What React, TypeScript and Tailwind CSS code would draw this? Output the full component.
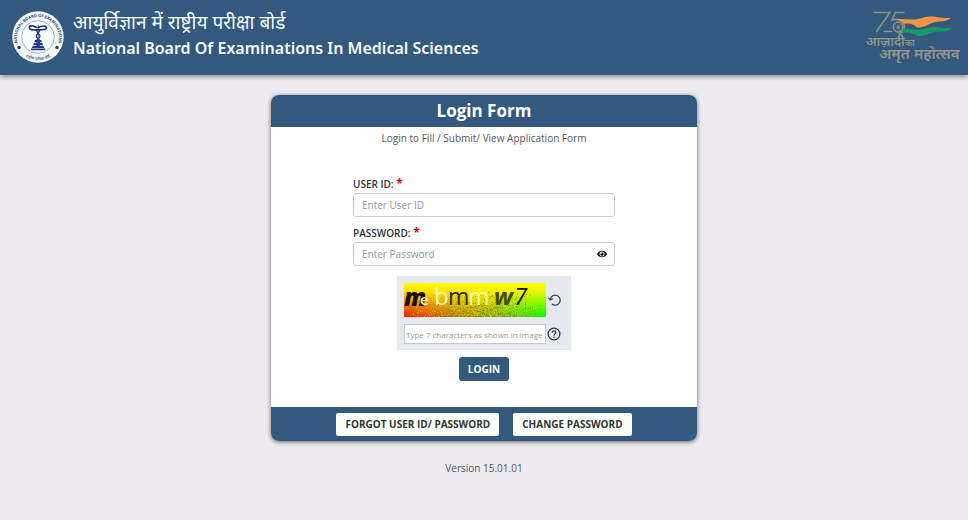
import React, { useState } from 'react';
import { FaEye } from 'react-icons/fa';

const HINDI = "'Noto Sans', 'Noto Sans Devanagari', 'Lohit Devanagari', sans-serif";

// Fixed-seed speckles so the captcha grain stays the same between renders
const speckles = (() => {
  const list: { x: number; y: number; c: string }[] = [];
  let seed = 7;
  const next = () => {
    seed = (seed * 16807) % 2147483647;
    return seed / 2147483647;
  };
  for (let i = 0; i < 900; i++) {
    const y = 33 - Math.floor(next() * next() * 26);
    const x = Math.floor(((next() + next()) / 2) * 142);
    const colors = ['#d8e000', '#7c7c10', '#c06a10', '#5fae10'];
    list.push({ x, y, c: colors[Math.floor(next() * 4)] });
  }
  return list;
})();

function BoardSeal() {
  return (
    <svg viewBox="0 0 52 52" className="h-[52px] w-[52px] shrink-0" role="img" aria-label="Board seal">
      <defs>
        <path id="sealTop" d="M6 33.500A21 21 0 1 1 46 33.500" />
        <path id="sealBottom" d="M10 43A23.500 23.500 0 0 0 42 43" />
      </defs>
      <circle cx="26" cy="26" r="25.700" fill="#f2f8fa" />
      <circle cx="26" cy="26" r="16.300" fill="#f6fbfb" stroke="#7e93a8" strokeWidth="0.700" />
      <text fontFamily="Open Sans, sans-serif" fontSize="4" fontWeight="700" fill="#2c4569">
        <textPath href="#sealTop" startOffset="50%" textAnchor="middle">NATIONAL BOARD OF EXAMINATIONS</textPath>
      </text>
      <text fontFamily={HINDI} fontSize="4" fontWeight="600" fill="#4c6480">
        <textPath href="#sealBottom" startOffset="50%" textAnchor="middle">राष्ट्रीय परीक्षा बोर्ड</textPath>
      </text>
      <circle cx="7" cy="36.500" r="1.700" fill="#33403f" />
      <circle cx="45" cy="36.500" r="1.700" fill="#33403f" />
      <g fill="none" stroke="#1c2a63" strokeLinecap="round">
        <path d="M24.500 16.500c-4.500-2.600-7.500-2-7.100.6.300 2.400 4.500 2 8.600 1.700s8.500.5 8.500-1.800c0-2.600-4-2.700-8.200-.5" strokeWidth="1.600" />
        <path d="M24.500 19c0 3 4 4 3.500 6.500s-4 2.500-3.500 5 3 2.500 3 5M27.800 19c0 3-4 4-3.500 6.500s4 2.500 3.500 5-2.800 2.500-3 5" strokeWidth="1.200" />
        <path d="M26.200 14v22" strokeWidth="0.800" />
      </g>
      <path d="M23 29h6.200l.6 2h-7.400zM22 31.700h8.200l.7 2.300h-9.600zM20.800 34.700h10.600l1 2.300H19.800zM19 37.600h14.200v1.600H19z" fill="#25357e" />
    </svg>
  );
}

function AmritMahotsavLogo() {
  return (
    <svg viewBox="0 0 96 54" className="h-[54px] w-24 shrink-0 overflow-visible" role="img" aria-label="Azadi Ka Amrit Mahotsav">
      <g fill="none" stroke="#8f9184" strokeWidth="1.600" strokeLinecap="round">
        <path d="M10 1.500h16L12.500 20.500" />
        <path d="M40 1.500h-8.500l-3.500 7.500c6-2 12.500 1 12.500 7 0 3.500-2.500 6-6 6" />
        <circle cx="34" cy="16" r="4.800" strokeWidth="1.400" />
        <circle cx="34" cy="16" r="1" strokeWidth="0.800" />
        <path d="M34 11.200v9.600M29.200 16h9.600M30.600 12.600l6.800 6.800M37.400 12.600l-6.800 6.800" strokeWidth="0.500" />
        <path d="M20 20.500h8" strokeWidth="1.300" />
      </g>
      <path d="M33 8c8-.3 16 1.200 20 .2 7-1.600 9-3.200 16-2.600 6 .7 12 2 18 1.100-4 3.800-8 3.600-14 4-8 .6-11 6.200-20 5.900-3-2.800-5-4.200-13-4z" fill="#ef9440" />
      <path d="M39 18c6-.8 11 1 16 .8 7-.8 10-3 16-2.800 6 .4 11 1.600 17 .8-4 4.300-9 3.600-15 4-8 .6-11 4.700-19 4.400-5-2.500-8-3.800-16-3.600z" fill="#159968" />
      <g fill="#969486" fontFamily={HINDI} fontWeight="600">
        <text x="2" y="35" fontSize="13">
          आज़ादी<tspan fontSize="9">का</tspan>
        </text>
        <text x="15" y="48" fontSize="15">अमृत महोत्सव</text>
      </g>
    </svg>
  );
}

function CaptchaImage() {
  return (
    <svg viewBox="0 0 142 34" className="h-[34px] w-[142px] overflow-visible" role="img" aria-label="Captcha">
      <defs>
        <linearGradient id="hue" x1="0" x2="1" y1="0" y2="0">
          <stop offset="0" stopColor="#ff1500" />
          <stop offset="0.500" stopColor="#b8a000" />
          <stop offset="1" stopColor="#00ff00" />
        </linearGradient>
        <linearGradient id="fade" x1="0" x2="0" y1="0" y2="1">
          <stop offset="0" stopColor="#ffff00" />
          <stop offset="0.250" stopColor="#fff600" stopOpacity="0.900" />
          <stop offset="1" stopColor="#ffff00" stopOpacity="0" />
        </linearGradient>
      </defs>
      <rect width="142" height="34" fill="url(#hue)" />
      <rect width="142" height="34" fill="url(#fade)" />
      {speckles.map((s, i) => (
        <rect key={i} x={s.x} y={s.y} width="1" height="1" fill={s.c} opacity="0.600" />
      ))}
      <g fontFamily="'Open Sans', sans-serif">
        <text x="0" y="23" fontSize="24" fontWeight="800" fontStyle="italic" fill="#17120a">m</text>
        <text x="16" y="22" fontSize="15" fontWeight="600" fill="#f5ecd0">e</text>
        <text x="30" y="22" fontSize="24" fill="#fff8c8">b</text>
        <text x="44" y="22" fontSize="23" fill="#2b2905">m</text>
        <text x="64" y="22" fontSize="23" fill="#fbf6a8">m</text>
        <text x="90" y="22" fontSize="24" fontWeight="700" fontStyle="italic" fill="#4a4a1c">w</text>
        <text x="110" y="22" fontSize="24" fontStyle="italic" fill="#141405">7</text>
      </g>
    </svg>
  );
}

function RefreshIcon() {
  return (
    <svg viewBox="0 0 14 14" className="h-[14px] w-[14px]" fill="none" stroke="#3d4148" strokeWidth="1.200">
      <path d="M2.300 6.200A5 5 0 1 1 3.800 10.800" />
      <path d="M0.400 4.800l1.800 2.200 2.500-1.500" />
    </svg>
  );
}

function HelpIcon() {
  return (
    <svg viewBox="0 0 14 14" className="h-[14px] w-[14px]" fill="none" stroke="#2f3238" strokeWidth="1.200">
      <circle cx="7" cy="7" r="5.900" />
      <path d="M5.200 5.500c0-2.300 3.700-2.200 3.700 0 0 1.400-1.900 1.400-1.900 2.900" />
      <path d="M7 9.400v1.300" />
    </svg>
  );
}

export default function App() {
  const [userId, setUserId] = useState('');
  const [password, setPassword] = useState('');
  const [captcha, setCaptcha] = useState('');
  const [showPassword, setShowPassword] = useState(false);

  return (
    <div className="min-h-screen bg-[#eeebf0] font-['Open_Sans',sans-serif] text-[#55565a]">
      <header className="flex items-start justify-between bg-[#33597e] pt-[11px] pr-2 pb-[10px] pl-3 shadow-[0_2px_5px_rgba(0,0,0,0.4)]">
        <div className="flex items-start gap-[9px]">
          <BoardSeal />
          <div className="font-['Noto_Sans','Noto_Sans_Devanagari',sans-serif] text-[#f4fafc]">
            <p className="text-[19px] leading-[22px]" lang="hi">
              आयुर्विज्ञान में राष्ट्रीय परीक्षा बोर्ड
            </p>
            <h1 className="mt-1 text-[16px] leading-[22px] font-semibold">
              National Board Of Examinations In Medical Sciences
            </h1>
          </div>
        </div>
        <AmritMahotsavLogo />
      </header>

      <main className="flex flex-col items-center pt-5">
        <form
          onSubmit={(e) => e.preventDefault()}
          className="w-[44%] min-w-[340px] overflow-hidden rounded-lg bg-white shadow-[0_1px_4px_rgba(0,0,0,0.6)]"
        >
          <h2 className="bg-[#33597e] text-center text-[17px] leading-8 font-bold text-white">Login Form</h2>
          <p className="pt-[3px] text-center text-[10px] leading-4">Login to Fill / Submit/ View Application Form</p>

          <div className="mx-auto flex w-[262px] flex-col pt-[29px] text-[10px]">
            <label htmlFor="userId" className="leading-[18px] font-semibold text-[#303236]">
              USER ID: <span className="text-[12px] leading-none font-bold text-red-600">*</span>
            </label>
            <input
              id="userId"
              type="text"
              placeholder="Enter User ID"
              value={userId}
              onChange={(e) => setUserId(e.target.value)}
              className="h-6 rounded-[3px] border border-[#ccccd0] bg-white px-2 outline-none placeholder:text-[#999]"
            />

            <label htmlFor="password" className="mt-[7px] leading-[18px] font-semibold text-[#303236]">
              PASSWORD: <span className="text-[12px] leading-none font-bold text-red-600">*</span>
            </label>
            <div className="flex h-6 items-center rounded-[3px] border border-[#ccccd0] bg-white pr-[7px] pl-2">
              <input
                id="password"
                type={showPassword ? 'text' : 'password'}
                placeholder="Enter Password"
                value={password}
                onChange={(e) => setPassword(e.target.value)}
                className="min-w-0 flex-1 outline-none placeholder:text-[#999]"
              />
              <button type="button" aria-label="Show password" onClick={() => setShowPassword(!showPassword)}>
                <FaEye size={10} className="text-[#111]" />
              </button>
            </div>
          </div>

          <div className="flex flex-col items-center pt-[10px]">
            <div className="flex w-[174px] flex-col gap-[7px] bg-[#e6e8f0] px-[7px] pt-[7px] pb-[6px]">
              <div className="flex items-center gap-[2px]">
                <CaptchaImage />
                <button type="button" aria-label="Reload captcha" onClick={() => setCaptcha('')}>
                  <RefreshIcon />
                </button>
              </div>
              <div className="flex items-center gap-[1px]">
                <input
                  type="text"
                  aria-label="Captcha text"
                  placeholder="Type 7 characters as shown in image"
                  value={captcha}
                  onChange={(e) => setCaptcha(e.target.value)}
                  className="h-5 w-[142px] border border-[#c8c8cc] bg-white px-px text-[8px] outline-none placeholder:text-[#999]"
                />
                <button type="button" aria-label="Captcha help">
                  <HelpIcon />
                </button>
              </div>
            </div>
            <button type="submit" className="mt-[7px] h-6 rounded-[3px] bg-[#33597e] px-[9px] text-[10px] font-bold text-white">
              LOGIN
            </button>
          </div>

          <div className="mt-[26px] flex justify-center gap-[14px] bg-[#33597e] pt-[6px] pb-[5px] text-[10px] font-bold text-[#303833]">
            <button type="button" className="h-[23px] rounded-[2px] bg-[#fbfffb] px-[9px]">FORGOT USER ID/ PASSWORD</button>
            <button type="button" className="h-[23px] rounded-[2px] bg-[#fbfffb] px-[9px]">CHANGE PASSWORD</button>
          </div>
        </form>
        <p className="pt-[18px] text-[10px] leading-[18px]">Version 15.01.01</p>
      </main>
    </div>
  );
}
